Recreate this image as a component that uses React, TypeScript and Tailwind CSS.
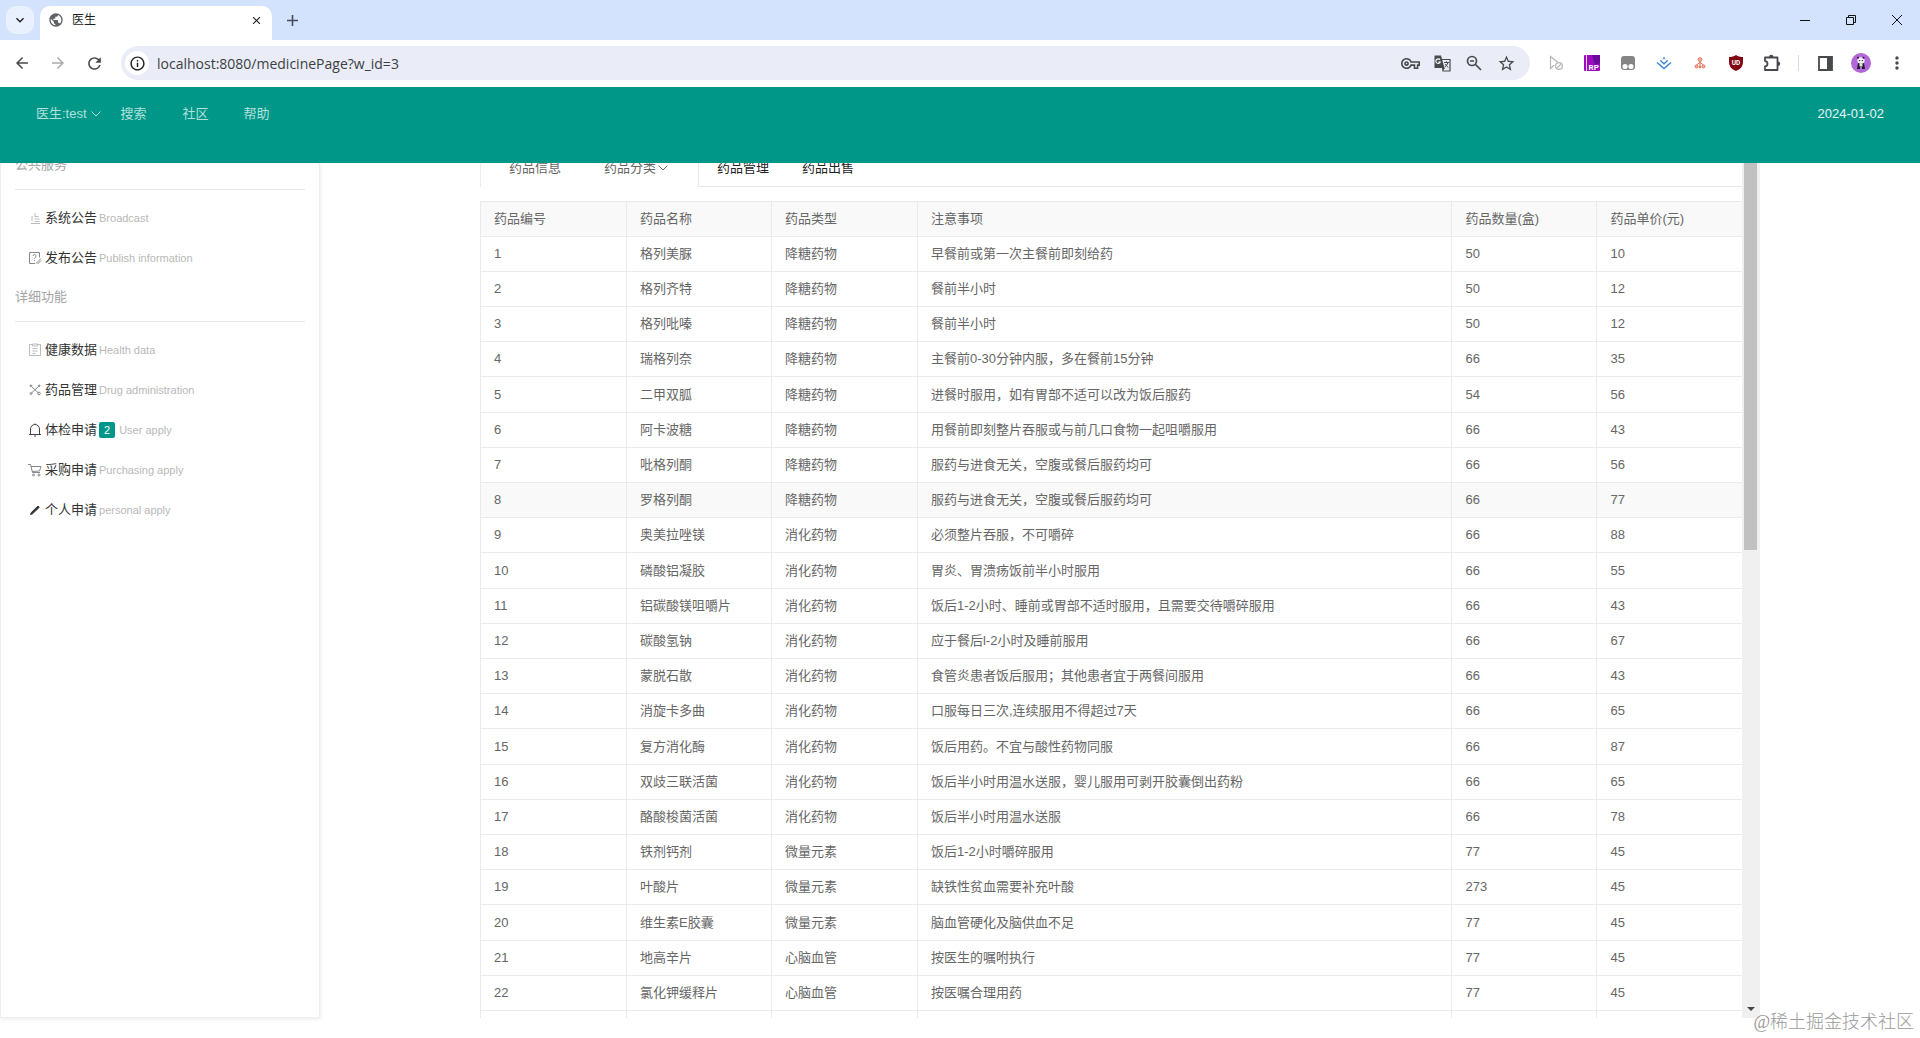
import React from "react";
import {
    MdArrowBack,
    MdArrowForward,
    MdClose,
    MdExpandMore,
    MdMoreVert,
    MdOutlineInfo,
    MdOutlineVpnKey,
    MdPublic,
    MdRefresh,
    MdStarBorder,
} from "react-icons/md";

type Remedio = [string, string, string, number, number];

const remedios: Remedio[] = [
    ["格列美脲", "降糖药物", "早餐前或第一次主餐前即刻给药", 50, 10],
    ["格列齐特", "降糖药物", "餐前半小时", 50, 12],
    ["格列吡嗪", "降糖药物", "餐前半小时", 50, 12],
    ["瑞格列奈", "降糖药物", "主餐前0-30分钟内服，多在餐前15分钟", 66, 35],
    ["二甲双胍", "降糖药物", "进餐时服用，如有胃部不适可以改为饭后服药", 54, 56],
    ["阿卡波糖", "降糖药物", "用餐前即刻整片吞服或与前几口食物一起咀嚼服用", 66, 43],
    ["吡格列酮", "降糖药物", "服药与进食无关，空腹或餐后服药均可", 66, 56],
    ["罗格列酮", "降糖药物", "服药与进食无关，空腹或餐后服药均可", 66, 77],
    ["奥美拉唑镁", "消化药物", "必须整片吞服，不可嚼碎", 66, 88],
    ["磷酸铝凝胶", "消化药物", "胃炎、胃溃疡饭前半小时服用", 66, 55],
    ["铝碳酸镁咀嚼片", "消化药物", "饭后1-2小时、睡前或胃部不适时服用，且需要交待嚼碎服用", 66, 43],
    ["碳酸氢钠", "消化药物", "应于餐后l-2小时及睡前服用", 66, 67],
    ["蒙脱石散", "消化药物", "食管炎患者饭后服用；其他患者宜于两餐间服用", 66, 43],
    ["消旋卡多曲", "消化药物", "口服每日三次,连续服用不得超过7天", 66, 65],
    ["复方消化酶", "消化药物", "饭后用药。不宜与酸性药物同服", 66, 87],
    ["双歧三联活菌", "消化药物", "饭后半小时用温水送服，婴儿服用可剥开胶囊倒出药粉", 66, 65],
    ["酪酸梭菌活菌", "消化药物", "饭后半小时用温水送服", 66, 78],
    ["铁剂钙剂", "微量元素", "饭后1-2小时嚼碎服用", 77, 45],
    ["叶酸片", "微量元素", "缺铁性贫血需要补充叶酸", 273, 45],
    ["维生素E胶囊", "微量元素", "脑血管硬化及脑供血不足", 77, 45],
    ["地高辛片", "心脑血管", "按医生的嘱咐执行", 77, 45],
    ["氯化钾缓释片", "心脑血管", "按医嘱合理用药", 77, 45],
];

const colunas = ["药品编号", "药品名称", "药品类型", "注意事项", "药品数量(盒)", "药品单价(元)"];

const Traco: React.FC<{ cor?: string; children: React.ReactNode }> = ({ cor = "#666", children }) => (
    <svg className="size-[14px] shrink-0" viewBox="0 0 14 14" fill="none" stroke={cor} strokeWidth="1" aria-hidden="true">
        {children}
    </svg>
);

const Seta: React.FC = () => (
    <svg className="h-[6px] w-[10px]" viewBox="0 0 10 6" fill="none" stroke="currentColor" aria-hidden="true">
        <path d="M0.5 0.5 5 5 9.5 0.5" />
    </svg>
);

const BarraAbas: React.FC = () => (
    <div className="flex h-10 bg-[#d3e3fd] text-[#1f1f1f]">
        <button aria-label="搜索标签页" className="mt-[6px] ml-[6px] flex size-7 items-center justify-center rounded-[10px] bg-[#e9f1fe]">
            <MdExpandMore className="size-4" />
        </button>
        <div className="mt-[6px] ml-[6px] flex w-[232px] items-center rounded-t-[10px] bg-white px-2 pb-[6px]">
            <MdPublic className="size-4 text-[#5f6368]" />
            <span className="ml-2 flex-1 text-[12px]">医生</span>
            <button aria-label="关闭标签页" className="flex size-4 items-center justify-center"><MdClose className="size-[13px]" /></button>
        </div>
        <button aria-label="新标签页" className="ml-3 flex w-4 items-center justify-center">
            <svg className="size-[11px]" viewBox="0 0 11 11" stroke="#474b5c" strokeWidth="1.6"><path d="M5.5 0v11M0 5.5h11" /></svg>
        </button>
        <div className="ml-auto flex">
            <button aria-label="最小化" className="flex w-[46px] items-center justify-center">
                <svg className="size-[10px]" viewBox="0 0 10 10" stroke="#111"><path d="M0 5.5h10" /></svg>
            </button>
            <button aria-label="还原" className="flex w-[46px] items-center justify-center">
                <svg className="size-[10px]" viewBox="0 0 10 10" fill="none" stroke="#111"><path d="M0.5 2.5h7v7h-7zM2.5 2.5v-2h7v7h-2" /></svg>
            </button>
            <button aria-label="关闭" className="flex w-[46px] items-center justify-center">
                <svg className="size-[10px]" viewBox="0 0 10 10" stroke="#111"><path d="M0 0l10 10M10 0 0 10" /></svg>
            </button>
        </div>
    </div>
);

const Extensao: React.FC<{ nome: string; children: React.ReactNode }> = ({ nome, children }) => (
    <button aria-label={nome} className="flex w-9 items-center justify-center">{children}</button>
);

const BarraEndereco: React.FC = () => (
    <div className="flex h-[47px] items-center bg-white pr-[5px] pb-px text-[#47494d]">
        <div className="flex w-[121px] items-center pl-1">
            <button aria-label="后退" className="flex w-9 justify-center"><MdArrowBack className="size-[18px]" /></button>
            <button aria-label="前进" className="flex w-9 justify-center text-[#a9abb0]"><MdArrowForward className="size-[18px]" /></button>
            <button aria-label="刷新" className="flex w-9 justify-center"><MdRefresh className="size-[19px]" /></button>
        </div>
        <div className="flex h-[34px] flex-1 items-center rounded-full bg-[#eaedf7] pr-2 pl-1">
            <span className="flex size-6 items-center justify-center rounded-full bg-white"><MdOutlineInfo className="size-[17px] text-[#1f1f1f]" /></span>
            <input
                type="text"
                aria-label="地址"
                defaultValue="localhost:8080/medicinePage?w_id=3"
                className="ml-2 flex-1 bg-transparent font-['Open_Sans','Noto_Sans',sans-serif] text-[14px] text-[#3c4043] outline-none"
            />
            <button aria-label="密码" className="flex w-8 justify-center"><MdOutlineVpnKey className="size-[19px]" /></button>
            <button aria-label="翻译" className="flex w-8 justify-center">
                <svg className="size-[17px]" viewBox="0 0 17 17" fill="none">
                    <path d="M8 4.500h8v11.500H8.500" stroke="#47494d" strokeWidth="1.200" />
                    <path d="M.5.500h6.500L10.500 13H.5zM8 13h3l-2.500 3.500z" fill="#47494d" />
                    <path d="M6 4.800A2.300 2.300 0 1 0 6.300 7H4.200" stroke="#fff" strokeWidth="1.100" />
                    <path d="M10 7.500h5M12.500 6.300v1.200M14 7.500q-.8 3-3.300 4.500M11.300 9q1 2 3 3.500" stroke="#47494d" />
                </svg>
            </button>
            <button aria-label="缩小" className="flex w-8 justify-center">
                <svg className="size-4" viewBox="0 0 16 16" fill="none" stroke="#47494d" strokeWidth="1.700">
                    <circle cx="6" cy="6" r="4.500" /><path d="m9.500 9.500 5.500 5.500M4 6h4" />
                </svg>
            </button>
            <button aria-label="收藏" className="flex w-8 justify-center"><MdStarBorder className="size-[19px]" /></button>
        </div>
        <div className="ml-2 flex">
            <Extensao nome="光标">
                <svg className="size-4" viewBox="0 0 16 16" fill="none" stroke="#b5b5b5" strokeWidth="1.2">
                    <path d="M6.500 10.500H5.500L2.500 13.500V1.500l7.500 6" />
                    <circle cx="11" cy="11" r="3.400" /><path d="m8.800 13.200 4.400-4.400" />
                </svg>
            </Extensao>
            <Extensao nome="RP">
                <svg className="size-4" viewBox="0 0 16 16">
                    <rect width="16" height="16" rx="1" fill="#9a0cbc" /><path d="M8 0h8v8l-5 2z" fill="#6a0a9c" />
                    <path d="M2.500 0v16" stroke="#f5d5ff" />
                    <text x="4.500" y="14.500" fontSize="8" fontWeight="700" fontFamily="Roboto, sans-serif" fill="#fff">RP</text>
                </svg>
            </Extensao>
            <Extensao nome="脚本">
                <svg className="size-[14px]" viewBox="0 0 14 14">
                    <rect width="14" height="14" rx="3" fill="#858585" /><circle cx="4" cy="10.500" r="2.600" fill="#fff" /><circle cx="10" cy="10.500" r="2.600" fill="#fff" />
                </svg>
            </Extensao>
            <Extensao nome="下载">
                <svg className="size-4" viewBox="0 0 16 16" fill="none" stroke="#3f86d9" strokeWidth="1.500">
                    <path d="m1 7.500 7 6 7-6M4.300 5.500 8 8.700l3.700-3.200" /><path d="M8 2 9.300 3.300 8 4.600 6.700 3.300z" fill="#3f86d9" stroke="none" />
                </svg>
            </Extensao>
            <Extensao nome="网络">
                <svg className="size-3" viewBox="0 0 12 12" fill="#f7b5a5" stroke="#e0705c">
                    <path d="M6 4v6M6 5.500 2.500 8M6 5.500l3.500 2.500" /><circle cx="6" cy="2.500" r="1.800" /><circle cx="2.500" cy="9.500" r="1.500" /><circle cx="6" cy="10" r="1" /><circle cx="9.500" cy="9.500" r="1.500" />
                </svg>
            </Extensao>
            <Extensao nome="盾牌">
                <svg className="size-4" viewBox="0 0 16 16">
                    <path d="M8 0c2 1.600 4.500 2 7 2v5c0 4.500-3 7.500-7 9-4-1.500-7-4.500-7-9V2c2.500 0 5-.4 7-2z" fill="#800610" />
                    <text x="8" y="9.500" fontSize="6.500" fontWeight="700" fontFamily="Roboto, sans-serif" fill="#fff" textAnchor="middle">UD</text>
                </svg>
            </Extensao>
            <Extensao nome="扩展程序">
                <svg className="size-[18px]" viewBox="0 0 18 18" fill="none" stroke="#47494d" strokeWidth="1.800" strokeLinejoin="round">
                    <path d="M2 3.500h12.500V16H2v-3.500q2.500-.3 2.500-2.700T2 7.100z" />
                    <path d="M6 3a2.200 2.200 0 0 1 4.400 0zM15 7.600a2.200 2.200 0 0 1 0 4.400z" fill="#47494d" stroke="none" />
                </svg>
            </Extensao>
            <span className="mx-2 h-4 w-px self-center bg-[#cfdcf5]"></span>
            <Extensao nome="侧边栏">
                <svg className="size-[15px]" viewBox="0 0 15 15"><path d="M1 1h13v13H1z" fill="none" stroke="#47494d" strokeWidth="1.800" /><path d="M9 1h5v13H9z" fill="#47494d" /></svg>
            </Extensao>
            <Extensao nome="个人资料">
                <svg className="size-5" viewBox="0 0 20 20">
                    <circle cx="10" cy="10" r="10" fill="#b068d8" />
                    <path d="M7 10h6l1 6h-3v-2H9v2H6z" fill="#221a2a" />
                    <ellipse cx="10" cy="7.500" rx="3.600" ry="3.200" fill="#f3f0f4" /><path d="M8.500 10.500h3v3h-3z" fill="#e8e4ea" />
                    <circle cx="7" cy="4.800" r="1" fill="#221a2a" /><circle cx="12.500" cy="4.800" r="1" fill="#221a2a" />
                    <circle cx="8.600" cy="7.600" r=".7" fill="#221a2a" /><circle cx="11.400" cy="7.600" r=".7" fill="#221a2a" />
                </svg>
            </Extensao>
            <Extensao nome="菜单"><MdMoreVert className="size-5" /></Extensao>
        </div>
    </div>
);

const ItemMenu: React.FC<{ icone: React.ReactNode; titulo: string; sub: string; aviso?: number }> = ({ icone, titulo, sub, aviso }) => (
    <li>
        <a href="#" className="flex h-10 items-center gap-[2px] pl-[13px] text-[13px] text-[#333]">
            {icone}
            <span className="ml-px">{titulo}</span>
            {aviso && <span className="mr-[2px] rounded-[2px] bg-[#009688] px-[5px] text-[11px] leading-4 text-white">{aviso}</span>}
            <span className="text-[11px] text-[#b8b8b8]">{sub}</span>
        </a>
    </li>
);

const MenuLateral: React.FC = () => (
    <aside className="w-1/6 overflow-hidden border border-t-0 border-[#eee] px-[14px] shadow-[1px_1px_4px_rgba(0,0,0,0.08)]">
        <h2 className="-mt-[17px] flex h-11 items-center border-b border-[#e6e6e6] pb-[6px] text-[13px] text-[#a5a5a5]">公共服务</h2>
        <ul className="pt-2">
            <ItemMenu titulo="系统公告" sub="Broadcast" icone={<Traco cor="#bbb"><path d="M3 12.500h9M4 10V5M6.500 10.500h5M6.500 8h5M6.500 5.500h4M7 2v3" /></Traco>} />
            <ItemMenu titulo="发布公告" sub="Publish information" icone={<Traco cor="#888"><path d="M7 12.500H1.500V1.500h10v5M5 5a1.500 1.500 0 1 1 2 1.500q-.5.300-.5 1.200M6.500 9v1M8 12.500l5-5M9.500 13l3.500-3.500" /></Traco>} />
        </ul>
        <h2 className="flex h-11 items-center border-b border-[#e6e6e6] pb-[6px] text-[13px] text-[#a5a5a5]">详细功能</h2>
        <ul className="pt-2">
            <ItemMenu titulo="健康数据" sub="Health data" icone={<Traco cor="#bbb"><path d="M4 1.500H1.500v11h11v-11H10M4.500 1h5v2h-5zM4.500 5.500h5M4.500 8h5M4.500 10.500h3" /></Traco>} />
            <ItemMenu titulo="药品管理" sub="Drug administration" icone={<Traco cor="#888"><path d="m3.500 3.500 7 6.500M11 3l-7.500 7M2 2l2 .5-1.500 1.500zM10 2.500l2-.5-.5 2" /><circle cx="3" cy="10.500" r="1" /><circle cx="11" cy="10.500" r="1.300" /></Traco>} />
            <ItemMenu titulo="体检申请" sub="User apply" aviso={2} icone={<Traco cor="#444"><path d="M1 11.500h12M2.500 11.500V6a4.500 4.500 0 0 1 9 0v5.500M6 13h2M7 1.500V.5" /></Traco>} />
            <ItemMenu titulo="采购申请" sub="Purchasing apply" icone={<Traco cor="#888"><path d="M0 1.500h2.500l2 8h7.500M3 3.500h10l-1.500 4.500-7.500.5" /><circle cx="5.500" cy="12" r="1" /><circle cx="11" cy="12" r="1" /></Traco>} />
            <ItemMenu titulo="个人申请" sub="personal apply" icone={<Traco cor="#333"><path d="m2.500 11.500.8-2L10 3l1.300 1.300-6.800 6.500z" fill="#333" /></Traco>} />
        </ul>
    </aside>
);

const TabelaRemedios: React.FC = () => (
    <table className="w-full table-fixed border-collapse border border-r-0 border-[#eaeaea] text-left text-[13px] leading-5 text-[#666]">
        <colgroup>
            <col className="w-[146px]" />
            <col className="w-[145px]" />
            <col className="w-[146px]" />
            <col />
            <col className="w-[145px]" />
            <col className="w-[145px]" />
        </colgroup>
        <thead>
            <tr className="h-[35px] bg-[#f9f9f9]">
                {colunas.map((c) => (
                    <th key={c} className="border border-[#eaeaea] px-[13px] font-normal last:border-r-0">{c}</th>
                ))}
            </tr>
        </thead>
        <tbody>
            {remedios.map((r, i) => (
                <tr key={i} className={i === 7 ? "h-[35px] bg-[#f9f9f9]" : "h-[35px] nth-[5n]:h-9"}>
                    {[i + 1, ...r].map((v, j) => (
                        <td key={j} className="border border-[#eaeaea] px-[13px] last:border-r-0">{v}</td>
                    ))}
                </tr>
            ))}
            <tr className="h-[35px]">
                {colunas.map((c) => (
                    <td key={c} className="border border-[#eaeaea] last:border-r-0"></td>
                ))}
            </tr>
        </tbody>
    </table>
);

const App: React.FC = () => {
    return (
        <div className="relative flex h-screen flex-col overflow-hidden bg-white font-['Liberation_Sans','Noto_Sans_CJK_SC',sans-serif]">
            <BarraAbas />
            <BarraEndereco />
            <header className="flex h-[76px] shrink-0 items-start bg-[#009688] px-9 text-[13px] leading-[54px] text-[#b2e0db]">
                <nav className="flex">
                    <button className="flex items-center gap-1">医生:test <Seta /></button>
                    <a href="#" className="ml-5">搜索</a>
                    <a href="#" className="ml-9">社区</a>
                    <a href="#" className="ml-[35px]">帮助</a>
                </nav>
                <time dateTime="2024-01-02" className="ml-auto text-[#e5f5f3]">2024-01-02</time>
            </header>
            <div className="mb-5 flex min-h-0 flex-1">
                <MenuLateral />
                <main className="ml-[8.3333%] flex w-2/3">
                    <div className="min-w-0 flex-1 overflow-hidden">
                        <div className="-mt-[13px] mb-[14px] flex h-[37px] text-[13px]">
                            <div className="flex w-[218px] items-center border-l border-[#eee] pb-px pl-7 text-[#666]">
                                <a href="#">药品信息</a>
                                <button className="ml-[43px] flex items-center gap-[2px]">药品分类<Seta /></button>
                            </div>
                            <div className="flex flex-1 items-center gap-[33px] border-b border-l border-[#e6e6e6] pl-[18px] text-[#222]">
                                <a href="#">药品管理</a>
                                <a href="#">药品出售</a>
                            </div>
                        </div>
                        <TabelaRemedios />
                    </div>
                    <div className="flex w-[18px] flex-col items-center bg-[#f0f0f0]">
                        <div className="h-[387px] w-[13px] bg-[#c1c1c1]"></div>
                        <svg className="mt-auto mb-[7px] h-1 w-2" viewBox="0 0 8 4" fill="#444" aria-hidden="true"><path d="M0 0h8L4 4z" /></svg>
                    </div>
                </main>
            </div>
            <p className="absolute right-[6px] bottom-1 font-['Liberation_Serif','Noto_Sans_CJK_SC',serif] text-[18px] leading-6 font-light text-[#999]">@稀土掘金技术社区</p>
        </div>
    );
};

export default App;
